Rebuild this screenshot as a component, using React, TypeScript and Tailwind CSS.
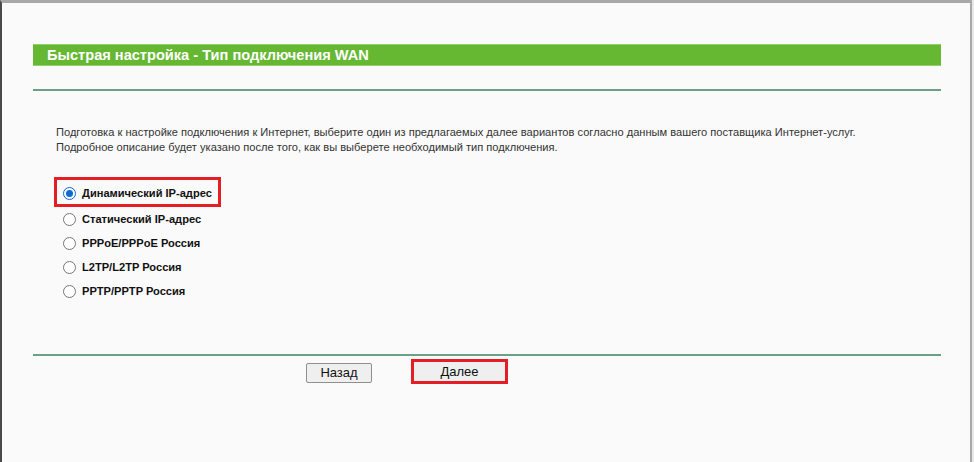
const options = [
  "Динамический IP-адрес",
  "Статический IP-адрес",
  "PPPoE/PPPoE Россия",
  "L2TP/L2TP Россия",
  "PPTP/PPTP Россия",
];

const Radio = ({ checked }: { checked: boolean }) => (
  <span
    className={
      "w-[13px] h-[13px] rounded-full border flex items-center justify-center bg-white shrink-0 " +
      (checked ? "border-[#0a6bd6]" : "border-[#767676]")
    }
  >
    {checked && <span className="w-[7px] h-[7px] rounded-full bg-[#0a6bd6]" />}
  </span>
);

const App = () => {
  return (
    <div className="w-[974px] h-[462px] bg-[#e8e8e8] font-['Liberation_Sans',Arial,sans-serif]">
      <div className="w-[972px] h-[462px] bg-[#fafafa] border-t-[3px] border-t-[#a8a8a8] border-l-2 border-l-[#4a4a4a] border-r-2 border-r-[#a9a9a9] pl-[31px]">
        <div className="w-[908px]">
          <div className="mt-[41px] h-[22px] bg-[#66b832] border-y border-y-[#8fd06a] flex items-center pl-[14px]">
            <span className="text-white font-bold text-[14.6px] leading-none">
              Быстрая настройка - Тип подключения WAN
            </span>
          </div>
          <div className="mt-[23px] h-[2px] bg-[#6b9f86]" />

          <div className="mt-[34px] pl-[23px] text-[11.1px] leading-[15px] text-[#333]">
            <p>
              Подготовка к настройке подключения к Интернет, выберите один из предлагаемых далее вариантов
              согласно данным вашего поставщика Интернет-услуг.
            </p>
            <p>Подробное описание будет указано после того, как вы выберете необходимый тип подключения.</p>
          </div>

          <div className="mt-[22px] pl-[21px] flex flex-col">
            {options.map((o, i) => (
              <div
                key={o}
                className={
                  "flex items-center gap-[6px] w-fit " +
                  (i === 0
                    ? "border-[3px] border-[#e31e24] h-[30px] pl-[6px] pr-[6px] pt-[3px]"
                    : "h-[24px] pl-[9px]")
                }
              >
                <Radio checked={i === 0} />
                <span className="text-[11.1px] font-bold text-[#111]">{o}</span>
              </div>
            ))}
          </div>

          <div className="mt-[51px] h-[2px] bg-[#6b9f86]" />

          <div className="mt-[3px] flex items-center pl-[273px] gap-[39px]">
            <button className="w-[66px] h-[20px] mt-[2px] bg-[#efefef] border border-[#8f8f8f] rounded-[2px] text-[13px] text-[#111] leading-none">
              Назад
            </button>
            <div className="border-[3px] border-[#e31e24] w-[97px] h-[25px] flex">
              <button className="flex-1 bg-[#efefef] text-[13px] text-[#111] leading-none">Далее</button>
            </div>
          </div>
        </div>
      </div>
    </div>
  );
};

export default App;
